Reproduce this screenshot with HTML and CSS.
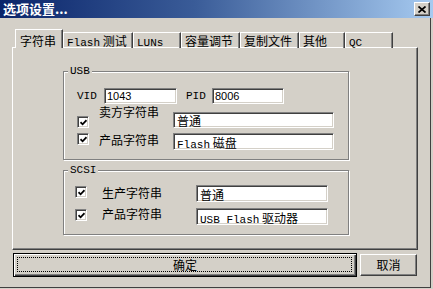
FILE: index.html
```html
<!DOCTYPE html>
<html lang="zh-CN">
<head>
<meta charset="utf-8">
<title>选项设置</title>
<link rel="stylesheet" href="styles.css">
</head>
<body>
<div class="dlg">
  <div class="title">
    <span class="title-text">选项设置...</span>
    <span class="close">
      <svg width="8" height="7" viewBox="0 0 8 7"><path d="M0.5 0.5L7.5 6.5M7.5 0.5L0.5 6.5" stroke="#000" stroke-width="1.7"/></svg>
    </span>
  </div>
  <div class="main">
    <div class="tabs">
      <div class="tab active t-str">字符串</div>
      <div class="tab t-flash"><span class="lat">Flash</span> 测试</div>
      <div class="tab t-luns"><span class="lat">LUNs</span></div>
      <div class="tab t-cap">容量调节</div>
      <div class="tab t-copy">复制文件</div>
      <div class="tab t-other">其他</div>
      <div class="tab t-qc"><span class="lat">QC</span></div>
    </div>
    <div class="panel">
      <div class="group usb">
        <span class="legend lat">USB</span>
        <div class="row ids">
          <span class="lat vid-lbl">VID</span>
          <span class="field vid">1043</span>
          <span class="lat pid-lbl">PID</span>
          <span class="field pid">8006</span>
        </div>
        <div class="row usb-r1">
          <span class="cb"><svg width="7" height="7" viewBox="0 0 7 7"><path d="M0.5 3.2L2.6 5.3L6.5 1.2" fill="none" stroke="#000" stroke-width="1.8"/></svg></span>
          <span class="lbl">卖方字符串</span>
          <span class="field wide">普通</span>
        </div>
        <div class="row usb-r2">
          <span class="cb"><svg width="7" height="7" viewBox="0 0 7 7"><path d="M0.5 3.2L2.6 5.3L6.5 1.2" fill="none" stroke="#000" stroke-width="1.8"/></svg></span>
          <span class="lbl">产品字符串</span>
          <span class="field wide"><span class="lat">Flash</span> 磁盘</span>
        </div>
      </div>
      <div class="group scsi">
        <span class="legend lat">SCSI</span>
        <div class="row scsi-r1">
          <span class="cb"><svg width="7" height="7" viewBox="0 0 7 7"><path d="M0.5 3.2L2.6 5.3L6.5 1.2" fill="none" stroke="#000" stroke-width="1.8"/></svg></span>
          <span class="lbl">生产字符串</span>
          <span class="field mid">普通</span>
        </div>
        <div class="row scsi-r2">
          <span class="cb"><svg width="7" height="7" viewBox="0 0 7 7"><path d="M0.5 3.2L2.6 5.3L6.5 1.2" fill="none" stroke="#000" stroke-width="1.8"/></svg></span>
          <span class="lbl">产品字符串</span>
          <span class="field mid"><span class="lat">USB Flash</span> 驱动器</span>
        </div>
      </div>
    </div>
    <div class="btns">
      <div class="btn ok">确定</div>
      <div class="btn cancel">取消</div>
    </div>
  </div>
</div>
</body>
</html>
```

FILE: styles.css
```css
body {
  margin: 0;
  background: #d4d0c8;
  font: 12px/14px "Noto Sans CJK SC", "Liberation Sans", sans-serif;
  color: #000;
}

.dlg {
  width: 433px;
  height: 288px;
  display: flex;
  flex-direction: column;
}

.lat {
  font-family: "Liberation Mono", monospace;
  font-size: 11px;
}

/* title bar */
.title {
  height: 18px;
  flex: none;
  display: flex;
  align-items: center;
  justify-content: space-between;
  padding: 0 3px 0 3px;
  background: linear-gradient(90deg, #0a246a, #3a5c98 45%, #a6caf0);
  color: #fff;
}

.title-text {
  font-weight: bold;
  font-size: 13px;
  line-height: 16px;
}

.close {
  width: 16px;
  height: 14px;
  box-sizing: border-box;
  background: #d4d0c8;
  border: 1px solid;
  border-color: #fff #404040 #404040 #fff;
  box-shadow: inset -1px -1px #808080;
  display: flex;
  align-items: center;
  justify-content: center;
}

.main {
  width: 431px;
  height: 270px;
  box-sizing: border-box;
  border-right: 1px solid #404040;
  border-bottom: 1px solid #404040;
}

/* tabs */
.tabs {
  display: flex;
  align-items: flex-end;
  height: 19px;
  margin: 11px 0 -1px 15px;
}

.tab {
  height: 16px;
  box-sizing: border-box;
  padding: 1px 0 0 3px;
  border-left: 1px solid #fff;
  border-top: 1px solid #fff;
  border-right: 1px solid #404040;
  box-shadow: inset -1px 0 #808080;
  white-space: nowrap;
}

.tab.active {
  height: 19px;
  padding: 4px 0 0 4px;
  position: relative;
  z-index: 1;
  background: #d4d0c8;
}

.t-str { width: 48px; }
.t-flash { width: 70px; }
.t-luns { width: 48px; }
.t-cap { width: 59px; }
.t-copy { width: 59px; }
.t-other { width: 46px; }
.t-qc { width: 48px; }

/* panel */
.panel {
  height: 203px;
  margin: 0 12px;
  box-sizing: border-box;
  background: #d4d0c8;
  border: 1px solid;
  border-color: #fff #404040 #404040 #fff;
  box-shadow: inset -1px -1px #808080;
  overflow: hidden;
}

.group {
  position: relative;
  width: 286px;
  margin-left: 50px;
  box-sizing: border-box;
  border: 1px solid #808080;
  box-shadow: inset 1px 1px #fff, 1px 1px #fff;
}

.group.usb {
  height: 89px;
  margin-top: 23px;
}

.group.scsi {
  height: 65px;
  margin-top: 10px;
}

.legend {
  position: absolute;
  top: -7px;
  left: 4px;
  padding: 0 2px;
  line-height: 12px;
  background: #d4d0c8;
}

.row {
  display: flex;
  align-items: flex-start;
}

.field {
  height: 16px;
  box-sizing: border-box;
  background: #fff;
  border: 1px solid;
  border-color: #808080 #fff #fff #808080;
  box-shadow: inset 1px 1px #404040, inset -1px -1px #d4d0c8;
  padding: 1px 0 0 3px;
  line-height: 13px;
  white-space: nowrap;
}

.cb {
  width: 12px;
  height: 12px;
  flex: none;
  box-sizing: border-box;
  background: #fff;
  border: 1px solid;
  border-color: #808080 #fff #fff #808080;
  box-shadow: inset 1px 1px #404040, inset -1px -1px #d4d0c8;
  display: flex;
  align-items: center;
  justify-content: center;
}

.lbl {
  white-space: nowrap;
}

/* usb rows */
.ids {
  height: 16px;
  margin-top: 16px;
  align-items: center;
}

.vid-lbl {
  width: 27px;
  margin-left: 13px;
}

.pid-lbl {
  width: 26px;
  margin-left: 9px;
}

.field.vid,
.field.pid {
  font-family: "Liberation Sans", sans-serif;
  font-size: 11px;
  padding-left: 2px;
}

.field.vid { width: 73px; }
.field.pid { width: 72px; }

.usb-r1 {
  height: 16px;
  margin-top: 8px;
}

.usb-r1 .cb,
.usb-r2 .cb {
  margin-left: 13px;
}

.usb-r1 .cb { margin-top: 4px; }

.usb-r1 .lbl,
.usb-r2 .lbl {
  width: 74px;
  margin-left: 10px;
}

.usb-r1 .lbl { margin-top: -7px; }

.usb-r2 {
  height: 17px;
  margin-top: 5px;
}

.usb-r2 .lbl { margin-top: 0; }

.field.wide {
  width: 161px;
}

.usb-r2 .field {
  height: 17px;
  padding-top: 2px;
}

/* scsi rows */
.scsi-r1 {
  height: 17px;
  margin-top: 14px;
}

.scsi-r2 {
  height: 17px;
  margin-top: 6px;
}

.scsi-r1 .cb,
.scsi-r2 .cb {
  margin: 1px 0 0 11px;
}

.scsi-r1 .lbl,
.scsi-r2 .lbl {
  width: 94px;
  margin-left: 15px;
}

.scsi-r1 .lbl { margin-top: 1px; }
.scsi-r2 .lbl { margin-top: -1px; }

.field.mid {
  width: 132px;
  height: 17px;
  padding-top: 2px;
}

/* buttons */
.btns {
  display: flex;
  align-items: center;
  height: 24px;
  margin-top: 3px;
}

.btn {
  box-sizing: border-box;
  display: flex;
  align-items: center;
  justify-content: center;
  background: #d4d0c8;
}

.btn.ok {
  position: relative;
  width: 344px;
  height: 24px;
  margin-left: 13px;
  border: 1px solid #000;
  box-shadow: inset 1px 1px #fff, inset -1px -1px #404040, inset -2px -2px #808080;
}

.btn.ok::after {
  content: "";
  position: absolute;
  top: 3px;
  left: 3px;
  right: 4px;
  bottom: 4px;
  border: 1px dotted #000;
}

.btn.cancel {
  width: 57px;
  height: 22px;
  margin-left: 3px;
  border: 1px solid;
  border-color: #fff #404040 #404040 #fff;
  box-shadow: inset -1px -1px #808080;
}
```
